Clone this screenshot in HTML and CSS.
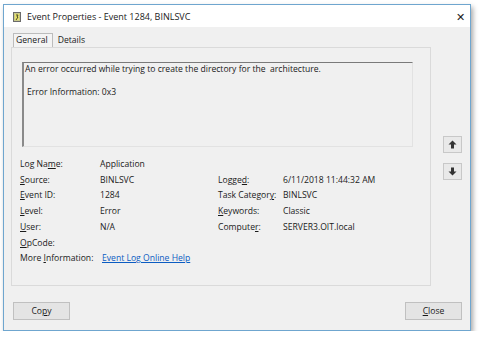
FILE: index.html
```html
<!DOCTYPE html>
<html lang="en">

<head>
    <meta charset="UTF-8">
    <title>Event Properties</title>
    <link rel="stylesheet" href="styles.css">
</head>

<body>
    <div class="window">
        <div class="titlebar">
            <svg class="app-icon" width="8" height="10" viewBox="0 0 8 10">
                <rect x="0.5" y="0.5" width="7" height="9" fill="#c9c98a" stroke="#6b6b6b"/>
                <rect x="2" y="2" width="4" height="6" fill="#e9e36a"/>
                <path d="M3 3 L5 3 L4 5 L5 5 L3 8" stroke="#4a4a2a" stroke-width="1" fill="none"/>
            </svg>
            <span class="title">Event Properties - Event 1284, BINLSVC</span>
            <span class="close-x">&#x2715;</span>
        </div>
        <div class="client">
            <div class="tabs">
                <span class="tab active">General</span>
                <span class="tab">Details</span>
            </div>
            <div class="main">
                <div class="panel">
                    <div class="description">
                        <p>An error occurred while trying to create the directory for the &nbsp;architecture.</p>
                        <p class="indent">Error Information: 0x3</p>
                    </div>
                    <div class="info">
                        <span>Log Na<u>m</u>e:</span><span>Application</span><span></span><span></span>
                        <span><u>S</u>ource:</span><span>BINLSVC</span><span>Logge<u>d</u>:</span><span>6/11/2018 11:44:32 AM</span>
                        <span><u>E</u>vent ID:</span><span>1284</span><span>Task Categor<u>y</u>:</span><span>BINLSVC</span>
                        <span><u>L</u>evel:</span><span>Error</span><span><u>K</u>eywords:</span><span>Classic</span>
                        <span><u>U</u>ser:</span><span>N/A</span><span>Compute<u>r</u>:</span><span>SERVER3.OIT.local</span>
                        <span><u>O</u>pCode:</span><span></span><span></span><span></span>
                        <span>More <u>I</u>nformation:</span><span class="more"><a href="#">Event Log Online Help</a></span>
                    </div>
                </div>
                <div class="nav-buttons">
                    <button class="arrow">
                        <svg width="9" height="9" viewBox="0 0 9 9"><path d="M4.5 0.5 L8.5 4.5 L6 4.5 L6 8.5 L3 8.5 L3 4.5 L0.5 4.5 Z" fill="#333"/></svg>
                    </button>
                    <button class="arrow">
                        <svg width="9" height="9" viewBox="0 0 9 9"><path d="M4.5 8.5 L8.5 4.5 L6 4.5 L6 0.5 L3 0.5 L3 4.5 L0.5 4.5 Z" fill="#333"/></svg>
                    </button>
                </div>
            </div>
            <div class="footer">
                <button class="btn">Co<u>p</u>y</button>
                <button class="btn"><u>C</u>lose</button>
            </div>
        </div>
    </div>
</body>

</html>
```

FILE: styles.css
```css
body {
    margin: 0;
    background-color: #ffffff;
    font-family: "Open Sans", "Noto Sans", sans-serif;
    font-size: 8.6px;
    color: #1a1a1a;
}

.window {
    margin: 4px 0 0 3px;
    width: 466px;
    height: 325px;
    border: 1px solid #6fa6cf;
    box-shadow: 2px 3px 5px rgba(0, 0, 0, 0.35);
    display: flex;
    flex-direction: column;
    background-color: #f0f0f0;
}

.titlebar {
    height: 22px;
    background-color: #ffffff;
    display: flex;
    align-items: center;
    padding-left: 9px;
    font-size: 9px;
}

.app-icon {
    margin-right: 6px;
    margin-top: 1px;
}

.title {
    flex-grow: 1;
    color: #222;
}

.close-x {
    width: 20px;
    text-align: center;
    font-size: 11px;
    color: #222;
}

.client {
    flex-grow: 1;
    display: flex;
    flex-direction: column;
    padding: 6px 8px 0 7px;
}

.tabs {
    display: flex;
    height: 14px;
    position: relative;
    z-index: 1;
}

.tab {
    padding: 0 4px;
    line-height: 13px;
    border: 1px solid transparent;
    border-bottom: none;
}

.tab.active {
    border-color: #bcbcbc;
    background-color: #f4f4f4;
    padding: 0 4px 0 2px;
    margin-left: 2px;
}

.main {
    display: flex;
}

.panel {
    width: 421px;
    height: 239px;
    border: 1px solid #dadada;
    padding: 14px 0 0 10px;
    box-sizing: border-box;
}

.description {
    width: 391px;
    height: 85px;
    border-top: 1px solid #7a7a7a;
    border-left: 2px solid #8a8a8a;
    border-right: 1px solid #e2e2e2;
    border-bottom: 1px solid #e2e2e2;
    box-sizing: border-box;
    padding: 1px 0 0 1px;
}

.description p {
    margin: 0;
    line-height: 11px;
}

.description .indent {
    margin-top: 12px;
    padding-left: 2px;
}

.info {
    display: grid;
    grid-template-columns: 80px 118px 65px auto;
    margin: 10px 0 0 -2px;
    line-height: 15.7px;
}

.info .more {
    grid-column: 2 / 5;
    padding-left: 2px;
}

.info a {
    color: #0b5cc2;
}

.nav-buttons {
    display: flex;
    flex-direction: column;
    gap: 10px;
    margin: 89px 0 0 12px;
}

.arrow {
    width: 19px;
    height: 17px;
    padding: 0;
    border: 1px solid #c8c8c8;
    background-color: #e9e9e9;
    display: flex;
    align-items: center;
    justify-content: center;
}

.footer {
    display: flex;
    justify-content: space-between;
    margin-top: 16px;
    padding: 0 0 0 2px;
}

.btn {
    width: 57px;
    height: 18px;
    padding: 0;
    border: 1px solid #c0c0c0;
    background-color: #e4e4e4;
    font-family: "Open Sans", "Noto Sans", sans-serif;
    font-size: 8.6px;
    color: #1a1a1a;
}
```
